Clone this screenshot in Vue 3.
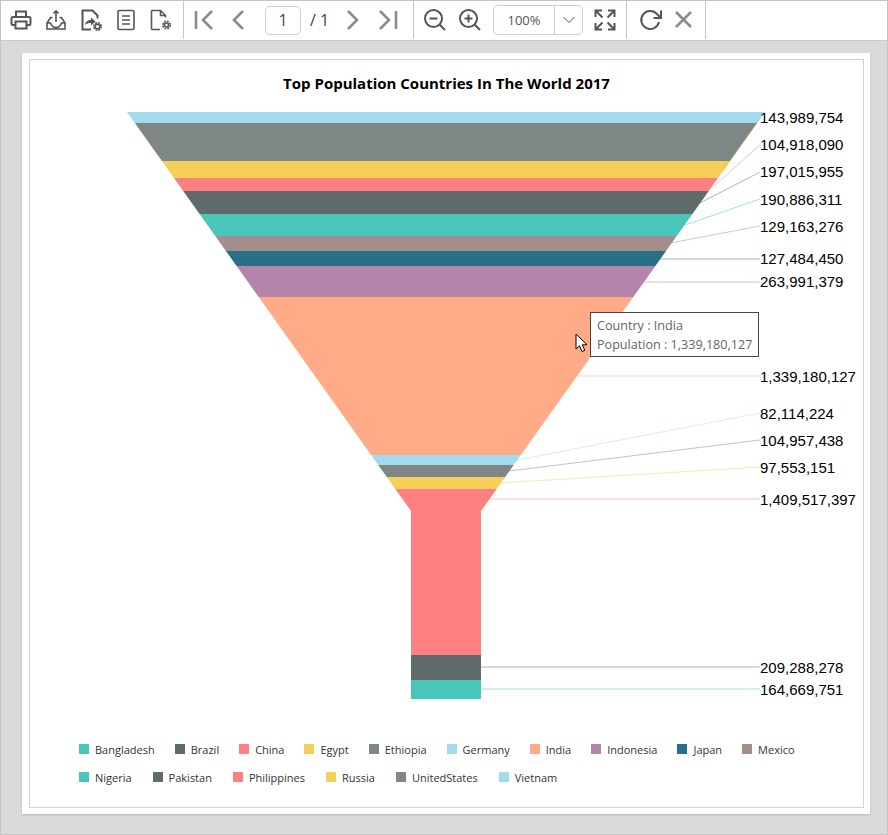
<template>
  <div class="viewer">
    <div class="toolbar">
      <div class="toolbar__group toolbar__group--file">
        <button type="button" class="tool-btn" aria-label="Print">
          <svg width="24" height="24" viewBox="0 0 24 24"><path d="M7 9V3.500h10V9M6.500 17H4a1.500 1.500 0 0 1-1.500-1.500v-5A1.500 1.500 0 0 1 4 9h16a1.500 1.500 0 0 1 1.500 1.500v5A1.500 1.500 0 0 1 20 17h-2.500M6.500 13.500h11v7h-11z" /></svg>
        </button>
        <button type="button" class="tool-btn" aria-label="Export">
          <svg width="24" height="24" viewBox="0 0 24 24"><path class="thin" d="M12 14V3M9.500 5.500L12 3l2.500 2.500M8.500 9.500H6.500L3 15v6h18v-6l-3.500-5.500h-2M3 15h3.500c1 3 3 4.500 5.500 4.500s4.500-1.500 5.500-4.500H21" /></svg>
        </button>
        <button type="button" class="tool-btn" aria-label="Export setup">
          <svg width="24" height="24" viewBox="0 0 24 24"><path d="M12 21.500H3.500v-19h10l5 5v3" /><path class="fill" d="M6 17c.5-3.500 3-5 6-5V9.500l4.500 4-4.500 4V15c-2.500 0-4.500.5-6 2z" /><circle class="thin" cx="18.500" cy="18.500" r="2.300" /><circle class="dash" cx="18.500" cy="18.500" r="3.700" /></svg>
        </button>
        <button type="button" class="tool-btn" aria-label="Document map">
          <svg width="24" height="24" viewBox="0 0 24 24"><path class="thin" d="M5.500 2.500h13a1.500 1.500 0 0 1 1.500 1.500v16a1.500 1.500 0 0 1-1.500 1.500h-13A1.500 1.500 0 0 1 4 20V4a1.500 1.500 0 0 1 1.500-1.500zM8 8h8M8 12h8M8 16h8" /></svg>
        </button>
        <button type="button" class="tool-btn" aria-label="Page setup">
          <svg width="24" height="24" viewBox="0 0 24 24"><path class="thin" d="M11 21.500H3.500a1 1 0 0 1-1-1v-17a1 1 0 0 1 1-1h8l5 5v2M11.500 2.500v5h5" /><circle class="thin" cx="17.500" cy="17" r="2" /><circle class="dash" cx="17.500" cy="17" r="3.700" /></svg>
        </button>
      </div>
      <div class="toolbar__group toolbar__group--nav">
        <button type="button" class="tool-btn tool-btn--muted" aria-label="First page">
          <svg width="24" height="24" viewBox="0 0 24 24"><path d="M4 3v18M20 3l-9 9 9 9" /></svg>
        </button>
        <button type="button" class="tool-btn tool-btn--muted" aria-label="Previous page">
          <svg width="24" height="24" viewBox="0 0 24 24"><path d="M16 3l-9 9 9 9" /></svg>
        </button>
        <input class="page-input" value="1" aria-label="Page" />
        <span class="page-total">/ 1</span>
        <button type="button" class="tool-btn tool-btn--muted" aria-label="Next page">
          <svg width="24" height="24" viewBox="0 0 24 24"><path d="M7 3l9 9-9 9" /></svg>
        </button>
        <button type="button" class="tool-btn tool-btn--muted" aria-label="Last page">
          <svg width="24" height="24" viewBox="0 0 24 24"><path d="M20 3v18M4 3l9 9-9 9" /></svg>
        </button>
      </div>
      <div class="toolbar__group toolbar__group--zoom">
        <button type="button" class="tool-btn" aria-label="Zoom out">
          <svg width="24" height="24" viewBox="0 0 24 24"><circle cx="10.500" cy="10.500" r="8.500" /><path d="M6.500 10.500h8M16.500 16.500l5.500 5.500" /></svg>
        </button>
        <button type="button" class="tool-btn" aria-label="Zoom in">
          <svg width="24" height="24" viewBox="0 0 24 24"><circle cx="10.500" cy="10.500" r="8.500" /><path d="M6.500 10.500h8M10.500 6.500v8M16.500 16.500l5.500 5.500" /></svg>
        </button>
        <div class="zoom-combo">
          <span class="zoom-combo__value">100%</span>
          <span class="zoom-combo__arrow">
            <svg width="14" height="8" viewBox="0 0 14 8"><path d="M1.500 1l5.500 5.500L12.500 1" /></svg>
          </span>
        </div>
        <button type="button" class="tool-btn" aria-label="Fit page">
          <svg width="24" height="24" viewBox="0 0 24 24"><path d="M2.500 9V2.500H9M15 2.500h6.500V9M21.500 15v6.500H15M9 21.500H2.500V15M3 3l6.500 6.500M21 3l-6.500 6.500M21 21l-6.500-6.500M3 21l6.500-6.500" /></svg>
        </button>
      </div>
      <div class="toolbar__group toolbar__group--actions">
        <button type="button" class="tool-btn" aria-label="Refresh">
          <svg width="24" height="24" viewBox="0 0 24 24"><path d="M20 14a9 9 0 1 1-2-8l3.500 3.500M22 2.500v7.500h-7.500" /></svg>
        </button>
        <button type="button" class="tool-btn tool-btn--muted tool-btn--close" aria-label="Close">
          <svg width="24" height="24" viewBox="0 0 24 24"><path d="M4 4l15 15M19 4L4 19" /></svg>
        </button>
      </div>
    </div>

    <div class="workspace">
      <div class="page">
        <div class="report">
          <h1 class="report__title">Top Population Countries In The World 2017</h1>
          <div class="plot">
            <svg class="funnel" width="833" height="610" viewBox="30 104 833 610">
              <polygon
                v-for="band in bandShapes"
                :key="band.name"
                :points="band.points"
                :fill="band.color"
              />
              <line
                v-for="item in labels"
                :key="item.text"
                :x1="item.x"
                :y1="item.y"
                x2="760"
                :y2="item.ty"
                :stroke="item.color"
                stroke-opacity="0.5"
              />
              <text
                v-for="item in labels"
                :key="`t-${item.text}`"
                x="760"
                :y="item.base"
                class="funnel__label"
              >{{ item.text }}</text>
            </svg>
            <div class="tooltip">
              <div>Country : India</div>
              <div>Population : 1,339,180,127</div>
            </div>
            <svg class="cursor" width="14" height="20" viewBox="0 0 14 20">
              <path d="M1 1v15l3.500-3.200L7 18.500l2.800-1.200-2.500-5.500H12z" fill="#fff" stroke="#000" />
            </svg>
          </div>
          <div class="legend">
            <div class="legend__row">
              <div v-for="item in legendTop" :key="item.name" class="legend__item">
                <span class="legend__swatch" :style="{ backgroundColor: item.color }" />
                {{ item.name }}
              </div>
            </div>
            <div class="legend__row legend__row--wide">
              <div v-for="item in legendBottom" :key="item.name" class="legend__item">
                <span class="legend__swatch" :style="{ backgroundColor: item.color }" />
                {{ item.name }}
              </div>
            </div>
          </div>
        </div>
      </div>
    </div>
  </div>
</template>

<script setup>
const TEAL = '#48c6b9';
const SLATE = '#5f6a6a';
const RED = '#fe8081';
const YELLOW = '#f4d058';
const GRAY = '#7f8786';
const SKY = '#a1dcee';

// funnel geometry, page pixels
const CENTER = 446;
const TOP_Y = 112;
const TOP_HALF = 319;
const NECK_Y = 511;
const NECK_HALF = 35;

const bands = [
  { name: 'Vietnam', y1: 112, y2: 123, color: SKY },
  { name: 'UnitedStates', y1: 123, y2: 161, color: GRAY },
  { name: 'Russia', y1: 161, y2: 178, color: YELLOW },
  { name: 'Philippines', y1: 178, y2: 191, color: RED },
  { name: 'Pakistan', y1: 191, y2: 214, color: SLATE },
  { name: 'Nigeria', y1: 214, y2: 236, color: TEAL },
  { name: 'Mexico', y1: 236, y2: 251, color: '#a58d8c' },
  { name: 'Japan', y1: 251, y2: 266, color: '#277088' },
  { name: 'Indonesia', y1: 266, y2: 297, color: '#b484aa' },
  { name: 'India', y1: 297, y2: 455, color: '#ffab88' },
  { name: 'Germany', y1: 455, y2: 465, color: SKY },
  { name: 'Ethiopia', y1: 465, y2: 477, color: GRAY },
  { name: 'Egypt', y1: 477, y2: 489, color: YELLOW },
  { name: 'China', y1: 489, y2: 655, color: RED },
  { name: 'Brazil', y1: 655, y2: 680, color: SLATE },
  { name: 'Bangladesh', y1: 680, y2: 699, color: TEAL },
];

function halfWidth(y) {
  if (y >= NECK_Y) return NECK_HALF;
  return TOP_HALF - ((TOP_HALF - NECK_HALF) * (y - TOP_Y)) / (NECK_Y - TOP_Y);
}

function bandPoints(y1, y2) {
  const ys = y1 < NECK_Y && y2 > NECK_Y ? [y1, NECK_Y, y2] : [y1, y2];
  const right = ys.map((y) => `${CENTER + halfWidth(y)},${y}`);
  const left = ys.map((y) => `${CENTER - halfWidth(y)},${y}`).reverse();
  return [...right, ...left].join(' ');
}

const bandShapes = bands.map((b) => ({ ...b, points: bandPoints(b.y1, b.y2) }));

const labels = [
  { text: '143,989,754', x: 723, y: 170, ty: 118, base: 123, color: '#c9a93a' },
  { text: '104,918,090', x: 715, y: 185, ty: 145, base: 150, color: RED },
  { text: '197,015,955', x: 700, y: 203, ty: 172, base: 177, color: SLATE },
  { text: '190,886,311', x: 685, y: 225, ty: 199, base: 205, color: TEAL },
  { text: '129,163,276', x: 670, y: 243, ty: 226, base: 232, color: '#a58d8c' },
  { text: '127,484,450', x: 660, y: 259, ty: 259, base: 264, color: '#277088' },
  { text: '263,991,379', x: 643, y: 282, ty: 282, base: 287, color: '#b484aa' },
  { text: '1,339,180,127', x: 578, y: 376, ty: 376, base: 382, color: '#ffab88' },
  { text: '82,114,224', x: 517, y: 460, ty: 413, base: 419, color: SKY },
  { text: '104,957,438', x: 509, y: 471, ty: 440, base: 446, color: GRAY },
  { text: '97,553,151', x: 500, y: 483, ty: 467, base: 473, color: YELLOW },
  { text: '1,409,517,397', x: 488, y: 499, ty: 499, base: 505, color: RED },
  { text: '209,288,278', x: 481, y: 667, ty: 667, base: 673, color: SLATE },
  { text: '164,669,751', x: 481, y: 689, ty: 689, base: 695, color: TEAL },
];

const legendTop = [
  { name: 'Bangladesh', color: TEAL },
  { name: 'Brazil', color: SLATE },
  { name: 'China', color: RED },
  { name: 'Egypt', color: YELLOW },
  { name: 'Ethiopia', color: GRAY },
  { name: 'Germany', color: SKY },
  { name: 'India', color: '#ffab88' },
  { name: 'Indonesia', color: '#b484aa' },
  { name: 'Japan', color: '#277088' },
  { name: 'Mexico', color: '#a58d8c' },
];

const legendBottom = [
  { name: 'Nigeria', color: TEAL },
  { name: 'Pakistan', color: SLATE },
  { name: 'Philippines', color: RED },
  { name: 'Russia', color: YELLOW },
  { name: 'UnitedStates', color: GRAY },
  { name: 'Vietnam', color: SKY },
];
</script>

<style>
html,
body {
  margin: 0;
  background: #fff;
}
</style>

<style scoped>
.viewer {
  box-sizing: border-box;
  display: flex;
  flex-direction: column;
  width: 888px;
  height: 835px;
  border: 1px solid #c4c4c4;
  font-family: 'Open Sans', 'Liberation Sans', sans-serif;
}

.toolbar {
  box-sizing: border-box;
  display: flex;
  flex: none;
  height: 40px;
  padding-bottom: 1px;
  background: #fff;
  border-bottom: 1px solid #c8c8c8;
}

.toolbar__group {
  box-sizing: border-box;
  display: flex;
  align-items: center;
  height: 38px;
  border-right: 1px solid #c8c8c8;
}

.toolbar__group--file {
  width: 183px;
  padding-left: 2px;
}

.toolbar__group--nav {
  width: 230px;
  padding-left: 2px;
}

.toolbar__group--zoom {
  width: 213px;
  padding-left: 3px;
}

.toolbar__group--actions {
  width: 79px;
  padding-left: 6px;
}

.tool-btn {
  display: flex;
  flex: none;
  align-items: center;
  justify-content: center;
  width: 35px;
  height: 34px;
  padding: 0;
  border: 0;
  background: none;
  color: #555;
  cursor: pointer;
}

.tool-btn--muted {
  color: #8c8c8c;
}

.tool-btn--close {
  width: 31px;
}

.tool-btn svg {
  fill: none;
  stroke: currentColor;
  stroke-width: 2;
}

.tool-btn--muted svg {
  stroke-width: 2.6;
}

.tool-btn svg .thin {
  stroke-width: 1.6;
}

.tool-btn svg .fill {
  fill: currentColor;
  stroke: none;
}

.tool-btn svg .dash {
  stroke-width: 1.6;
  stroke-dasharray: 1.9 1;
}

.page-input {
  box-sizing: border-box;
  flex: none;
  width: 36px;
  height: 29px;
  margin-left: 9px;
  padding: 0;
  border: 1px solid #cfcfcf;
  border-radius: 5px;
  color: #444;
  font-family: inherit;
  font-size: 16px;
  text-align: center;
}

.page-total {
  box-sizing: border-box;
  flex: none;
  width: 34px;
  padding-left: 9px;
  color: #444;
  font-size: 16px;
}

.zoom-combo {
  box-sizing: border-box;
  display: flex;
  flex: none;
  width: 90px;
  height: 30px;
  margin: 0 4px 0 6px;
  border: 1px solid #cfcfcf;
  border-radius: 5px;
  color: #555;
  font-size: 13px;
}

.zoom-combo__value {
  display: flex;
  flex: 1;
  align-items: center;
  justify-content: center;
}

.zoom-combo__arrow {
  display: flex;
  flex: none;
  align-items: center;
  justify-content: center;
  width: 27px;
  border-left: 1px solid #cfcfcf;
}

.zoom-combo__arrow svg {
  fill: none;
  stroke: #555;
}

.workspace {
  flex: 1;
  padding: 12px 17px 0 21px;
  background: #dadada;
}

.page {
  box-sizing: border-box;
  height: 761px;
  padding: 6px 6px 6px 7px;
  background: #fff;
  box-shadow: 0 1px 2px rgba(0, 0, 0, 0.15);
}

.report {
  box-sizing: border-box;
  height: 100%;
  border: 1px solid #d2d2d2;
}

.report__title {
  height: 31px;
  margin: 0;
  padding-top: 13px;
  color: #000;
  font-size: 15px;
  font-weight: 700;
  line-height: 20px;
  text-align: center;
}

.plot {
  position: relative;
  height: 610px;
}

.funnel {
  display: block;
}

.funnel__label {
  fill: #000;
  font-family: 'Liberation Sans', Arial, sans-serif;
  font-size: 15px;
}

.tooltip {
  position: absolute;
  left: 560px;
  top: 208px;
  box-sizing: border-box;
  width: 169px;
  height: 45px;
  padding: 3px 6px;
  border: 1px solid #444;
  background: #fff;
  color: #666;
  font-size: 12.6px;
  line-height: 19px;
  white-space: nowrap;
}

.cursor {
  position: absolute;
  left: 545px;
  top: 229px;
}

.legend {
  display: flex;
  flex-direction: column;
  gap: 10px;
  padding: 26px 0 0 49px;
}

.legend__row {
  display: flex;
  gap: 20px;
  height: 18px;
  align-items: center;
}

.legend__row--wide {
  gap: 21px;
}

.legend__item {
  display: flex;
  align-items: center;
  gap: 6px;
  color: #333;
  font-size: 11px;
  white-space: nowrap;
}

.legend__swatch {
  flex: none;
  width: 10px;
  height: 10px;
}
</style>
